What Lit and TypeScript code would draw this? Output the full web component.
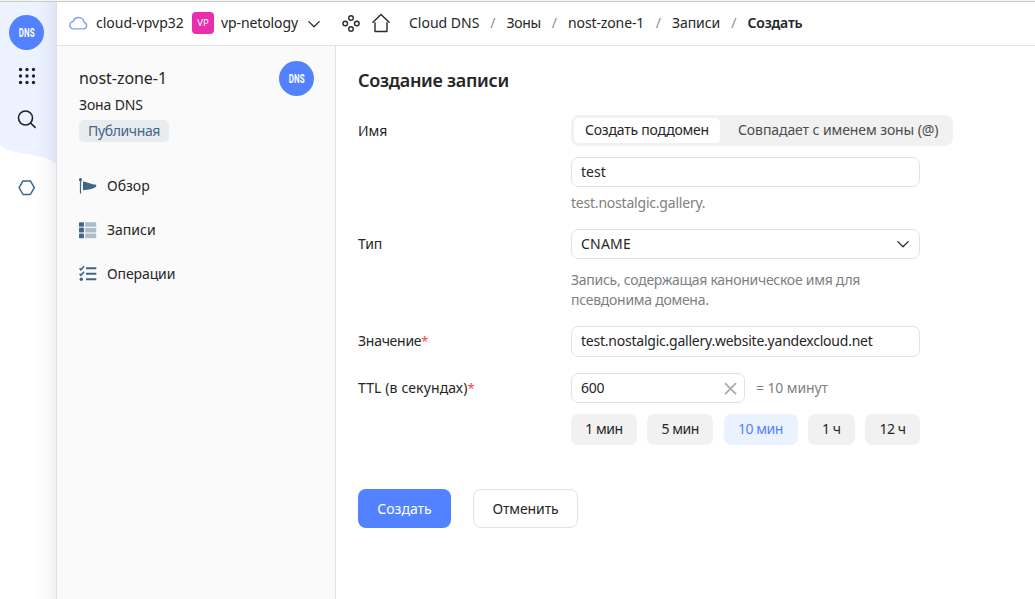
import { LitElement, html, svg, css } from "lit";
import { customElement, property, state } from "lit/decorators.js";
import { classMap } from "lit/directives/class-map.js";

const chevron = html`<svg width="14" height="14" viewBox="0 0 14 14" fill="none" stroke="#2b2b2b" stroke-width="1.3" stroke-linecap="round" stroke-linejoin="round"><path d="M1.8 4.6 7 9.8l5.2-5.2" /></svg>`;

@customElement("dns-badge")
class DnsBadge extends LitElement {
  static styles = css`
    :host { display: flex; align-items: center; justify-content: center; width: 35px; height: 35px; border-radius: 50%; background: #5282ff; flex: none; }
    .label { font: 700 12.5px/16px Roboto, sans-serif; color: #fff; transform: scaleX(0.63); letter-spacing: 0.3px; }
  `;
  render() {
    return html`<span class="label">DNS</span>`;
  }
}

@customElement("app-rail")
class AppRail extends LitElement {
  static styles = css`
    :host { display: block; position: relative; width: 57px; background: #fff; overflow: hidden; }
    .tint { position: absolute; inset: 0 auto auto 0; }
    .shade { position: absolute; inset: 0 0 0 auto; width: 22px; background: linear-gradient(90deg, rgba(30, 40, 70, 0), rgba(30, 40, 70, 0.02) 45%, rgba(30, 40, 70, 0.07)); }
    .items { position: relative; display: flex; flex-direction: column; align-items: center; width: 53px; padding-top: 13px; }
    .grid { margin-top: 17px; }
    .search { margin-top: 24px; }
    .hex { margin-top: 50px; }
    svg { display: block; }
  `;
  render() {
    const dots = [0, 1, 2].flatMap((r) => [0, 1, 2].map((c) => svg`<circle cx=${2.5 + c * 6.5} cy=${2.5 + r * 6.5} r="1.65" />`));
    return html`
      <svg class="tint" width="57" height="170" viewBox="0 0 57 170"><path d="M0 0H57V163C48 153 26 153 11 149Q4 147 0 142.500Z" fill="#ecf2ff" /></svg>
      <div class="shade"></div>
      <div class="items">
        <dns-badge></dns-badge>
        <svg class="grid" width="18" height="18" fill="#1f2126">${dots}</svg>
        <svg class="search" width="20" height="20" viewBox="0 0 20 20" fill="none" stroke="#1f2126" stroke-width="1.6" stroke-linecap="round"><circle cx="8.5" cy="9" r="7" /><path d="m13.5 14 4.6 4.4" /></svg>
        <svg class="hex" width="18" height="17" viewBox="0 0 18 17" fill="none" stroke="#41668a" stroke-width="1.5" stroke-linejoin="round"><path d="M5 1.9h7.400L16.3 8.7l-3.9 6.800H5L1.100 8.7Z" /></svg>
      </div>
    `;
  }
}

@customElement("app-header")
class AppHeader extends LitElement {
  static styles = css`
    :host { display: flex; align-items: center; height: 41px; padding-bottom: 2px; border-bottom: 1px solid #e5e5e5; padding-left: 12px; white-space: pre; background: #fff; }
    svg { display: block; flex: none; }
    .cloud { width: 88px; margin-left: 8px; }
    .folder { display: flex; align-items: center; justify-content: center; width: 22px; height: 22px; border-radius: 4px; background: #e82ead; color: #fff; font-size: 9.5px; margin-left: 8px; flex: none; }
    .name { width: 77px; margin-left: 7px; letter-spacing: -0.1px; }
    .chev { margin-left: 9px; padding-top: 2px; }
    .nodes { margin-left: 21px; }
    .home { margin-left: 11px; }
    .crumbs { display: flex; margin-left: 18px; }
    .sep { width: 27.5px; text-align: center; color: #8f8f8f; }
    .c0 { width: 70px; }
    .c1 { width: 34px; letter-spacing: -0.35px; }
    .c2 { width: 76.5px; letter-spacing: -0.12px; }
    .c3 { width: 48px; letter-spacing: -0.08px; }
    .c4 { font-weight: 600; letter-spacing: -0.2px; }
  `;
  render() {
    const crumbs = ["Cloud DNS", "Зоны", "nost-zone-1", "Записи", "Создать"];
    return html`
      <svg width="19" height="16" viewBox="0 0 19 16" fill="none" stroke="#7f9ff5" stroke-width="1.3"><path d="M4.600 13.900h10a3.300 3.300 0 0 0 .5-6.500C14.800 4.500 12.300 2.500 9.500 2.500 6.900 2.500 5 4 4.300 6.500A3.700 3.700 0 0 0 4.600 13.900Z" /></svg>
      <span class="cloud">cloud-vpvp32</span>
      <span class="folder">VP</span>
      <span class="name">vp-netology</span>
      <span class="chev">${chevron}</span>
      <svg class="nodes" width="18" height="18" viewBox="0 0 18 18" fill="none" stroke="#2b2b2b" stroke-width="1.4"><circle cx="9" cy="4" r="2.3" /><circle cx="3.2" cy="9.5" r="2.3" /><circle cx="14.8" cy="9.5" r="2.3" /><circle cx="9" cy="15" r="2.3" /></svg>
      <svg class="home" width="20" height="20" viewBox="0 0 20 20" fill="none" stroke="#2b2b2b" stroke-width="1.4" stroke-linecap="round" stroke-linejoin="round"><path d="m1.900 9.300 8.100-7.900 8.100 7.900M4 9.800v8.700h12V9.800" /></svg>
      <nav class="crumbs">${crumbs.map((c, i) => html`${i ? html`<span class="sep">/</span>` : ""}<span class="c${i}">${c}</span>`)}</nav>
    `;
  }
}

@customElement("zone-nav")
class ZoneNav extends LitElement {
  static styles = css`
    :host { display: block; width: 279px; box-sizing: border-box; border-right: 1px solid #e3e3e3; background: #fafafa; padding: 15px 21px 0 22px; }
    .head { display: flex; justify-content: space-between; align-items: flex-start; }
    .zone { font-size: 16px; line-height: 22px; letter-spacing: -0.05px; margin-top: 6px; }
    .kind { line-height: 20px; margin-top: 6px; letter-spacing: -0.15px; }
    .tag { display: inline-block; box-sizing: border-box; height: 22px; line-height: 21px; margin-top: 5px; padding: 0 9px; width: 90px; border-radius: 5px; background: #e8ecef; color: #41668a; letter-spacing: -0.37px; white-space: nowrap; }
    .list { display: flex; flex-direction: column; gap: 24px; margin-top: 34px; }
    .item { display: flex; align-items: center; gap: 10px; height: 20px; }
    .i2 { letter-spacing: -0.1px; }
    svg { display: block; }
  `;
  render() {
    const flag = svg`<path d="M1.5 2v14.5" stroke="#41668a" stroke-width="1.2" /><circle cx="1.5" cy="2.6" r="1.6" /><path d="M4 4.500c4 .2 7 2.500 13.200 3.300v2c-3 2.200-8 3.200-13.200 3.400Z" />`;
    const rows = svg`${[1.2, 6.9, 12.6].map((y) => svg`<rect x="0" y=${y} width="5" height="4.6" rx=".8" /><rect x="6.2" y=${y} width="11" height="4.6" fill="#adbccb" />`)}<path d="M0 6.3h5M0 12h5" stroke="#adbccb" stroke-width="1" />`;
    const ops = svg`<path d="M7 3.2h10.300M7 8.700h10.300M7 14.300h10.300" stroke="#41668a" stroke-width="1.9" /><path d="m.5 3.200 1.400 1.600 3.200-3.600M.5 8.700l1.400 1.600 3.200-3.600" stroke="#41668a" stroke-width="1.6" fill="none" /><circle cx="2.3" cy="14.3" r="1.7" />`;
    const items: [unknown, string][] = [[flag, "Обзор"], [rows, "Записи"], [ops, "Операции"]];
    return html`
      <div class="head">
        <div>
          <div class="zone">nost-zone-1</div>
          <div class="kind">Зона DNS</div>
          <div class="tag">Публичная</div>
        </div>
        <dns-badge></dns-badge>
      </div>
      <div class="list">
        ${items.map(([icon, label], i) => html`<div class="item"><svg width="18" height="18" viewBox="0 0 18 18" fill="#41668a">${icon}</svg><span class="i${i}">${label}</span></div>`)}
      </div>
    `;
  }
}

@customElement("record-form")
class RecordForm extends LitElement {
  @property({ type: Number }) ttl = 600;
  @state() private preset = 2;

  static styles = css`
    :host { display: block; flex: 1; background: #fff; padding: 22px 0 0 22px; white-space: nowrap; }
    .title { font-size: 18px; font-weight: 600; line-height: 24px; letter-spacing: -0.3px; }
    .row { display: grid; grid-template-columns: 213px 382px; }
    .label { height: 30px; line-height: 30px; letter-spacing: -0.1px; }
    .name { margin-top: 23px; }
    .first { line-height: 32px; }
    .type { margin-top: 16px; }
    .value { margin-top: 16px; }
    .ttl { margin-top: 16px; }
    .val { letter-spacing: -0.27px; }
    .sec { letter-spacing: 0.12px; }
    .req { color: #ff3d3d; font-size: 13px; }
    .switch { display: flex; box-sizing: border-box; height: 31px; padding: 3px; border-radius: 8px; background: #f1f1f1; color: #4c4c4c; line-height: 24px; }
    .on { box-sizing: border-box; width: 146px; padding-left: 11px; border-radius: 5px; background: #fff; color: #262626; letter-spacing: -0.21px; height: 25px; }
    .off { padding-left: 18px; letter-spacing: -0.09px; }
    .field { display: flex; align-items: center; justify-content: space-between; box-sizing: border-box; width: 349px; height: 30px; border: 1px solid #e2e2e2; border-radius: 7px; padding: 0 9px; background: #fff; }
    .sub { margin-top: 11px; }
    .url { height: 31px; letter-spacing: -0.23px; padding-bottom: 1px; }
    .hint { color: #808080; line-height: 20px; }
    .domain { margin-top: 6px; letter-spacing: -0.21px; }
    .about { margin-top: 11px; letter-spacing: -0.27px; }
    .cname { letter-spacing: 0.2px; }
    .line { display: flex; align-items: center; }
    .secs { width: 174px; padding-right: 7px; letter-spacing: -0.3px; }
    .eq { margin-left: 11px; letter-spacing: -0.1px; }
    .presets { display: flex; justify-content: space-between; width: 349px; margin-top: 11px; }
    .preset { height: 31px; line-height: 29px; border-radius: 7px; background: #f1f1f1; text-align: center; letter-spacing: -0.45px; }
    .w66 { width: 66px; }
    .w74 { width: 74px; }
    .w47 { width: 47px; }
    .w55 { width: 55px; }
    .active { background: #ebf2ff; color: #5282ff; }
    .actions { display: flex; gap: 22px; margin-top: 44px; }
    .btn { box-sizing: border-box; height: 39px; line-height: 38px; border-radius: 8px; text-align: center; }
    .primary { width: 93px; background: #5282ff; color: #fff; line-height: 40px; }
    .plain { width: 105px; border: 1px solid #e2e2e2; letter-spacing: -0.12px; }
    svg { display: block; }
  `;
  render() {
    const presets: [string, string][] = [["1 мин", "w66"], ["5 мин", "w66"], ["10 мин", "w74"], ["1 ч", "w47"], ["12 ч", "w55"]];
    return html`
      <div class="title">Создание записи</div>
      <div class="row name">
        <div class="label first">Имя</div>
        <div>
          <div class="switch"><div class="on">Создать поддомен</div><div class="off">Совпадает с именем зоны (@)</div></div>
          <div class="field sub">test</div>
          <div class="hint domain">test.nostalgic.gallery.</div>
        </div>
      </div>
      <div class="row type">
        <div class="label">Тип</div>
        <div>
          <div class="field"><span class="cname">CNAME</span>${chevron}</div>
          <div class="hint about">Запись, содержащая каноническое имя для<br />псевдонима домена.</div>
        </div>
      </div>
      <div class="row value">
        <div class="label val">Значение<span class="req">*</span></div>
        <div class="field url">test.nostalgic.gallery.website.yandexcloud.net</div>
      </div>
      <div class="row ttl">
        <div class="label sec">TTL (в секундах)<span class="req">*</span></div>
        <div>
          <div class="line">
            <div class="field secs">${this.ttl}<svg width="13" height="13" viewBox="0 0 13 13" stroke="#ababab" stroke-width="1.8" stroke-linecap="round"><path d="m1.5 1.7 10 10m0-10-10 10" /></svg></div>
            <span class="hint eq">= ${this.ttl / 60} минут</span>
          </div>
          <div class="presets">
            ${presets.map(([t, w], i) => html`<div class=${classMap({ preset: true, [w]: true, active: i === this.preset })} @click=${() => (this.preset = i)}>${t}</div>`)}
          </div>
        </div>
      </div>
      <div class="actions"><div class="btn primary">Создать</div><div class="btn plain">Отменить</div></div>
    `;
  }
}

@customElement("app-root")
class AppRoot extends LitElement {
  static styles = css`
    :host { display: flex; flex-direction: column; box-sizing: border-box; width: 1035px; height: 599px; overflow: hidden; background: #fff; font: 14px/20px "Noto Sans", sans-serif; color: #262626; }
    .edge { height: 1px; background: #f6f5f4; border-bottom: 1px solid #cbcbc9; flex: none; }
    .app { display: flex; flex: 1; }
    .page { display: flex; flex-direction: column; flex: 1; box-shadow: -1px 0 0 #dde0e8; position: relative; }
    .body { display: flex; flex: 1; }
  `;
  render() {
    return html`
      <div class="edge"></div>
      <div class="app">
        <app-rail></app-rail>
        <div class="page">
          <app-header></app-header>
          <div class="body"><zone-nav></zone-nav><record-form></record-form></div>
        </div>
      </div>
    `;
  }
}
